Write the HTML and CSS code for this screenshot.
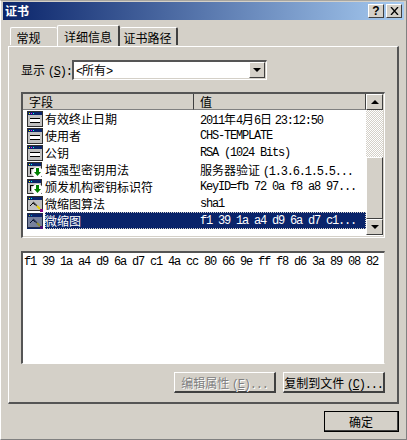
FILE: index.html
```html
<!DOCTYPE html>
<html lang="zh-CN">
<head>
    <meta charset="UTF-8">
    <title>证书</title>
    <link rel="stylesheet" href="styles.css">
</head>
<body>
    <svg class="defs" width="0" height="0">
        <!-- field icons -->
        <symbol id="icon-field" viewBox="0 0 16 16">
            <rect x="0.500" y="0.500" width="15" height="15" fill="#c0c0c0" stroke="#303030"/>
            <rect x="1" y="1" width="14" height="3" fill="#0a246a"/>
            <rect x="2" y="2" width="1" height="1" fill="#ff0"/>
            <rect x="4" y="2" width="1" height="1" fill="#f0f"/>
            <rect x="6" y="2" width="1" height="1" fill="#0ff"/>
            <rect x="3" y="7" width="10" height="5" fill="#fff"/>
            <rect x="3" y="7" width="10" height="1" fill="#000"/>
            <rect x="3" y="11" width="10" height="1" fill="#000"/>
        </symbol>
        <symbol id="icon-ext" viewBox="0 0 16 16">
            <rect x="0.500" y="0.500" width="14" height="14" fill="#c0c0c0" stroke="#303030"/>
            <rect x="1" y="1" width="13" height="3" fill="#0a246a"/>
            <rect x="2" y="2" width="1" height="1" fill="#ff0"/>
            <rect x="4" y="2" width="1" height="1" fill="#0ff"/>
            <rect x="3" y="6" width="6" height="1" fill="#000"/>
            <rect x="3" y="6" width="1" height="6" fill="#000"/>
            <circle cx="10.500" cy="10.500" r="5.500" fill="#fff"/>
            <path d="M9 6h3v4h2l-3.500 4L7 10h2z" fill="#008000"/>
        </symbol>
        <symbol id="icon-thumb" viewBox="0 0 16 16">
            <rect x="0.500" y="0.500" width="15" height="14" fill="#c0c0c0" stroke="#303030"/>
            <rect x="1" y="1" width="14" height="3" fill="#0a246a"/>
            <rect x="2" y="2" width="1" height="1" fill="#ff0"/>
            <rect x="4" y="2" width="1" height="1" fill="#0ff"/>
            <path d="M3 10l3-3 2 2" fill="none" stroke="#000"/>
            <path d="M6 6l4 4" stroke="#404040" stroke-width="1.500"/>
            <path d="M10 10l3 3" stroke="#e8d000" stroke-width="2"/>
            <rect x="13" y="13" width="3" height="3" fill="#800080"/>
        </symbol>
    </svg>

    <div class="dialog">
        <div class="titlebar">
            <span class="title">证书</span>
            <span class="title-btn help">?</span>
            <span class="title-btn close">
                <svg width="9" height="8" viewBox="0 0 9 8"><path d="M1 0l7 8M8 0l-7 8" stroke="#000" stroke-width="1.300" fill="none"/></svg>
            </span>
        </div>

        <div class="tabs">
            <div class="tab tab-first">常规</div>
            <div class="tab active">详细信息</div>
            <div class="tab tab-last">证书路径</div>
        </div>

        <div class="panel">
            <div class="show-row">
                <span class="show-label">显示 <span class="latin">(<u>S</u>):</span></span>
                <div class="select">
                    <span class="select-value"><span class="latin">&lt;</span>所有<span class="latin">&gt;</span></span>
                    <span class="btn-square"><i class="arrow-down"></i></span>
                </div>
            </div>

            <div class="list">
                <div class="list-main">
                    <div class="list-head">
                        <div class="col-field">字段</div>
                        <div class="col-value">值</div>
                    </div>
                    <div class="row">
                        <svg class="row-icon"><use href="#icon-field"/></svg>
                        <span class="cell-field">有效终止日期</span>
                        <span class="cell-value"><span class="latin">2011</span>年<span class="latin">4</span>月<span class="latin">6</span>日 <span class="latin">23:12:50</span></span>
                    </div>
                    <div class="row">
                        <svg class="row-icon"><use href="#icon-field"/></svg>
                        <span class="cell-field">使用者</span>
                        <span class="cell-value latin">CHS-TEMPLATE</span>
                    </div>
                    <div class="row">
                        <svg class="row-icon"><use href="#icon-field"/></svg>
                        <span class="cell-field">公钥</span>
                        <span class="cell-value latin">RSA (1024 Bits)</span>
                    </div>
                    <div class="row">
                        <svg class="row-icon"><use href="#icon-ext"/></svg>
                        <span class="cell-field">增强型密钥用法</span>
                        <span class="cell-value">服务器验证 <span class="latin">(1.3.6.1.5.5...</span></span>
                    </div>
                    <div class="row">
                        <svg class="row-icon"><use href="#icon-ext"/></svg>
                        <span class="cell-field">颁发机构密钥标识符</span>
                        <span class="cell-value latin">KeyID=fb 72 0a f8 a8 97...</span>
                    </div>
                    <div class="row">
                        <svg class="row-icon"><use href="#icon-thumb"/></svg>
                        <span class="cell-field">微缩图算法</span>
                        <span class="cell-value latin">sha1</span>
                    </div>
                    <div class="row selected">
                        <span class="icon-tint"><svg class="row-icon"><use href="#icon-thumb"/></svg></span>
                        <div class="selected-bar">
                            <span class="cell-field">微缩图</span>
                            <span class="cell-value latin">f1 39 1a a4 d9 6a d7 c1...</span>
                        </div>
                    </div>
                </div>
                <div class="scrollbar">
                    <span class="btn-square"><i class="arrow-up"></i></span>
                    <div class="track"></div>
                    <div class="thumb"></div>
                    <span class="btn-square"><i class="arrow-down"></i></span>
                </div>
            </div>

            <div class="detail latin">f1 39 1a a4 d9 6a d7 c1 4a cc 80 66 9e ff f8 d6 3a 89 08 82</div>

            <div class="panel-buttons">
                <div class="button disabled">编辑属性 <span class="latin">(<u>E</u>)...</span></div>
                <div class="button">复制到文件 <span class="latin">(<u>C</u>)...</span></div>
            </div>
        </div>

        <div class="footer">
            <div class="button default">确定</div>
        </div>
    </div>
</body>
</html>
```

FILE: styles.css
```css
* {
    box-sizing: border-box;
}

html, body {
    margin: 0;
    padding: 0;
}

body {
    width: 407px;
    height: 440px;
    overflow: hidden;
    background-color: #d4d0c8;
    color: #000;
    font-family: "Noto Sans CJK SC", "Liberation Sans", sans-serif;
    font-size: 12px;
}

.defs {
    position: absolute;
}

.latin {
    font-family: "Liberation Mono", monospace;
    font-size: 12px;
    letter-spacing: -1.2px;
}

.dialog {
    width: 407px;
    height: 440px;
    display: flex;
    flex-direction: column;
    border-top: 1px solid #a8a6a0;
    border-left: 1px solid #fff;
    border-bottom: 1px solid #808080;
    border-right: 1px solid #808080;
}

/* title bar */
.titlebar {
    display: flex;
    align-items: center;
    gap: 2px;
    height: 18px;
    margin: 1px 2px 0 2px;
    padding: 0 2px 0 2px;
    background: linear-gradient(to right, #0a246a, #a6caf0);
}

.title {
    flex: 1;
    color: #fff;
    font-weight: bold;
    line-height: 18px;
}

.title-btn {
    display: flex;
    justify-content: center;
    align-items: center;
    width: 16px;
    height: 14px;
    background-color: #d4d0c8;
    border-top: 1px solid #fff;
    border-left: 1px solid #fff;
    border-right: 1px solid #404040;
    border-bottom: 1px solid #404040;
    font-family: "Liberation Sans", sans-serif;
    font-size: 12px;
    font-weight: bold;
    line-height: 12px;
}

/* tabs */
.tabs {
    display: flex;
    align-items: flex-end;
    height: 26px;
    margin-left: 9px;
    position: relative;
    z-index: 1;
}

.tab {
    height: 18px;
    padding-top: 1px;
    line-height: 18px;
    text-align: center;
    white-space: nowrap;
    background-color: #d4d0c8;
    border-top: 1px solid #fff;
    border-left: 1px solid #fff;
    border-right: 2px solid #404040;
    border-radius: 2px 2px 0 0;
    margin-bottom: 1px;
}

.tab-first {
    width: 47px;
    padding-right: 11px;
    border-right: none;
}

.tab.active {
    width: 63px;
    height: 21px;
    line-height: 19px;
    margin-bottom: 0;
}

.tab-last {
    width: 58px;
    padding-right: 1px;
    border-left: none;
}

.panel {
    height: 358px;
    margin-left: 7px;
    margin-right: 7px;
    padding: 13px 13px 0 12px;
    border-top: 1px solid #fff;
    border-left: 1px solid #fff;
    border-right: 2px solid #555;
    border-bottom: 2px solid #555;
}

/* show selector */
.show-row {
    display: flex;
    align-items: center;
    height: 20px;
}

.show-label {
    width: 51px;
    white-space: nowrap;
}

.select {
    display: flex;
    width: 195px;
    height: 20px;
    padding-right: 1px;
    background-color: #fff;
    border-top: 2px solid #555;
    border-left: 2px solid #555;
    border-right: 1px solid #fff;
    border-bottom: 1px solid #fff;
    box-shadow: inset -1px -1px 0 #d4d0c8;
}

.select-value {
    flex: 1;
    padding-left: 2px;
    line-height: 16px;
}

.btn-square {
    display: flex;
    flex: none;
    justify-content: center;
    align-items: center;
    width: 16px;
    height: 16px;
    background-color: #d4d0c8;
    border-top: 1px solid #fff;
    border-left: 1px solid #fff;
    border-right: 1px solid #404040;
    border-bottom: 1px solid #404040;
}

.arrow-down, .arrow-up {
    width: 0;
    height: 0;
    border-left: 4px solid transparent;
    border-right: 4px solid transparent;
}

.arrow-down {
    border-top: 4px solid #000;
}

.arrow-up {
    border-bottom: 4px solid #000;
}

/* field list */
.list {
    display: flex;
    width: 364px;
    height: 146px;
    margin-top: 12px;
    background-color: #fff;
    border-top: 2px solid #555;
    border-left: 2px solid #555;
    border-right: 1px solid #fff;
    border-bottom: 1px solid #fff;
    box-shadow: inset -1px -1px 0 #d4d0c8;
}

.list-main {
    width: 343px;
}

.list-head {
    display: flex;
    height: 16px;
    line-height: 15px;
    background-color: #d4d0c8;
}

.col-field {
    width: 171px;
    padding-left: 6px;
    border-right: 1px solid #404040;
    border-bottom: 1px solid #808080;
}

.col-value {
    flex: 1;
    padding-left: 6px;
    border-right: 1px solid #404040;
    border-bottom: 1px solid #808080;
}

.row {
    display: flex;
    align-items: center;
    height: 17px;
    padding-left: 4px;
    white-space: nowrap;
}

.row-icon {
    display: block;
    flex: none;
    width: 16px;
    height: 16px;
    margin-right: 2px;
}

.cell-field {
    width: 152px;
}

.cell-value {
    padding-left: 3px;
}

.icon-tint {
    flex: none;
    width: 16px;
    height: 16px;
    margin-right: 2px;
    background-color: #0a246a;
}

.icon-tint .row-icon {
    opacity: 0.6;
}

.selected-bar {
    display: flex;
    align-items: center;
    flex: 1;
    height: 17px;
    color: #fff;
    background-color: #0a246a;
    outline: 1px dotted #d4d0c8;
    outline-offset: -1px;
}

.scrollbar {
    display: flex;
    flex-direction: column;
    width: 18px;
    height: 141px;
    padding-right: 1px;
}

.scrollbar .btn-square {
    width: 17px;
}

.track {
    height: 47px;
    background-image: repeating-conic-gradient(#d4d0c8 0 25%, #fff 0 50%);
    background-size: 2px 2px;
}

.thumb {
    flex: 1;
    background-color: #d4d0c8;
    border-top: 1px solid #fff;
    border-left: 1px solid #fff;
    border-right: 1px solid #404040;
    border-bottom: 1px solid #404040;
}

/* detail box */
.detail {
    width: 364px;
    height: 113px;
    margin-top: 13px;
    padding: 1px 1px;
    line-height: 16px;
    white-space: nowrap;
    background-color: #fff;
    border-top: 2px solid #555;
    border-left: 2px solid #555;
    border-right: 1px solid #d4d0c8;
    border-bottom: 1px solid #fff;
}

/* buttons */
.panel-buttons {
    display: flex;
    justify-content: flex-end;
    gap: 7px;
    width: 364px;
    margin-top: 8px;
}

.button {
    width: 102px;
    height: 21px;
    line-height: 19px;
    text-align: center;
    white-space: nowrap;
    background-color: #d4d0c8;
    border-top: 1px solid #fff;
    border-left: 1px solid #fff;
    border-right: 2px solid #404040;
    border-bottom: 2px solid #404040;
}

.button.disabled {
    color: #808080;
    text-shadow: 1px 1px 0 #fff;
}

.footer {
    display: flex;
    justify-content: flex-end;
    padding: 7px 7px 0 0;
}

.button.default {
    width: 75px;
    outline: 1px solid #000;
    outline-offset: -1px;
}
```
